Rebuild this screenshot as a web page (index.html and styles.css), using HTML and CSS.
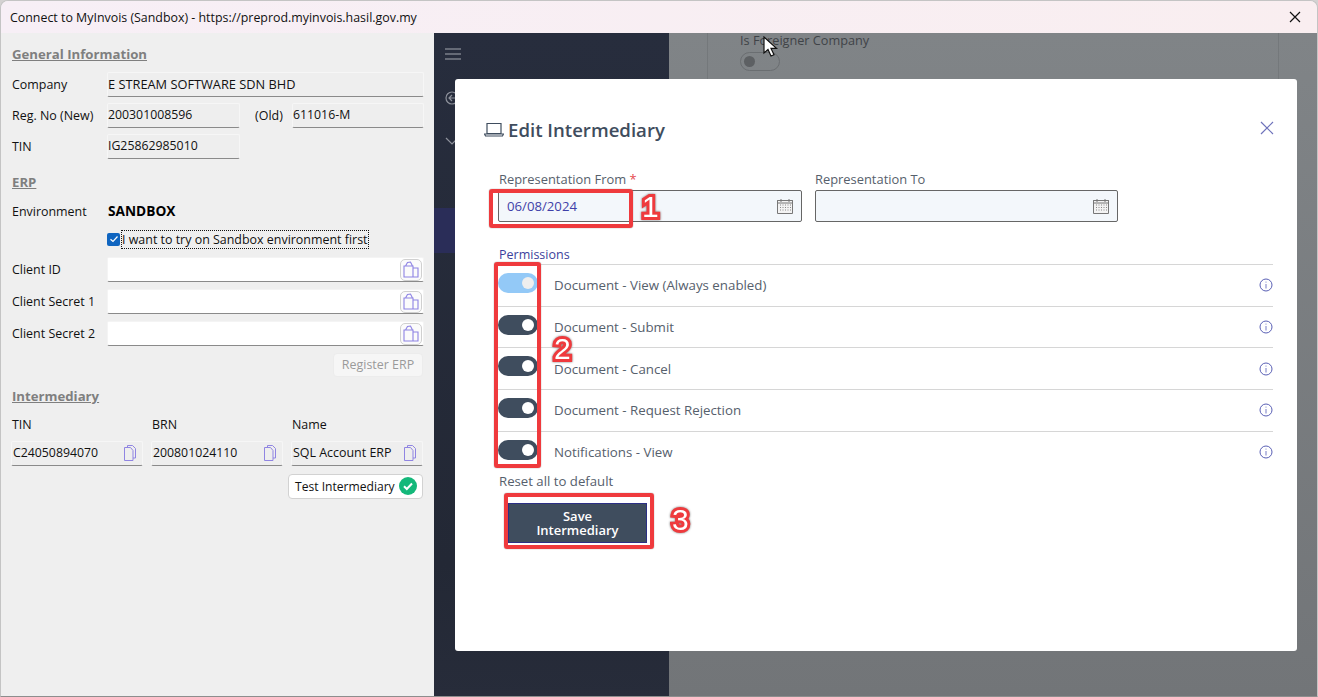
FILE: index.html
```html
<!DOCTYPE html>
<html lang="en">
<head>
<meta charset="utf-8">
<title>Connect to MyInvois (Sandbox)</title>
<link rel="stylesheet" href="styles.css">
</head>
<body>
<svg class="defs" width="0" height="0" aria-hidden="true">
  <symbol id="paste" viewBox="0 0 16 18"><path d="M1 5h9v11H1zM2.500 5 4.500 1.500 7.500 1l2 4M10 7h5v9H7.500M1 16h9" fill="none" stroke="currentColor" stroke-width="1.100"/></symbol>
  <symbol id="copy" viewBox="0 0 14 18"><path d="M4.500 3V1.500h5l3 3V14H10M1.500 3.500h6l2.500 3v10H1.500z" fill="none" stroke="currentColor" stroke-width="1"/></symbol>
  <symbol id="cal" viewBox="0 0 16 16"><path d="M.5 2.500h15v13H.5z" fill="#f3f3f3" stroke="#777"/><path d="M.5 2.500h15v2.500H.5zM4 1v3M12 1v3" fill="none" stroke="#777"/><path d="M3 7h1M5.500 7h1M8 7h1M10.500 7h1M13 7h1M3 9.500h1M5.500 9.500h1M8 9.500h1M10.500 9.500h1M13 9.500h1M3 12h1M5.500 12h1M8 12h1M10.500 12h1M13 12h1" stroke="#888" fill="none"/></symbol>
  <symbol id="info" viewBox="0 0 14 14"><circle cx="7" cy="7" r="6" fill="none" stroke="#5a60b5" stroke-width="1"/><path d="M7 6v4.500" stroke="#9ea2d6" stroke-width="1.400"/><path d="M7 3.600v1.200" stroke="#b4b7e0" stroke-width="1.400"/></symbol>
</svg>
<div class="window">
  <header class="titlebar">
    <span>Connect to MyInvois (Sandbox) - https://preprod.myinvois.hasil.gov.my</span>
    <svg class="win-close" width="12" height="12" viewBox="0 0 12 12"><path d="M1 1l10 10M11 1 1 11" stroke="#111" stroke-width="1.200" fill="none"/></svg>
  </header>
  <div class="content">
    <aside class="panel">
      <h2 class="section first">General Information</h2>
      <div class="row r1"><label class="lbl">Company</label><div class="field ro grow wide-text">E STREAM SOFTWARE SDN BHD</div></div>
      <div class="row r2"><label class="lbl">Reg. No (New)</label><div class="field ro half">200301008596</div><label class="old">(Old)</label><div class="field ro half-b">611016-M</div></div>
      <div class="row r2"><label class="lbl">TIN</label><div class="field ro half">IG25862985010</div></div>
      <h2 class="section erp">ERP</h2>
      <div class="row env"><label class="lbl">Environment</label><strong class="env-value">SANDBOX</strong></div>
      <div class="row chk">
        <span class="checkbox"><svg width="10" height="10" viewBox="0 0 10 10"><path d="M1.500 5.200 4 7.500l4.500-5" fill="none" stroke="#fff" stroke-width="1.200"/></svg></span>
        <span class="chk-text">I want to try on Sandbox environment first</span>
      </div>
      <div class="row cred"><label class="lbl">Client ID</label><div class="field white grow"><span class="paste"><svg width="16" height="18"><use href="#paste"/></svg></span></div></div>
      <div class="row cred"><label class="lbl">Client Secret 1</label><div class="field white grow"><span class="paste"><svg width="16" height="18"><use href="#paste"/></svg></span></div></div>
      <div class="row cred"><label class="lbl">Client Secret 2</label><div class="field white grow"><span class="paste"><svg width="16" height="18"><use href="#paste"/></svg></span></div></div>
      <div class="row end"><button class="btn disabled">Register ERP</button></div>
      <h2 class="section inter">Intermediary</h2>
      <div class="triple labels"><span>TIN</span><span>BRN</span><span>Name</span></div>
      <div class="triple">
        <div class="field ro copyf">C24050894070<svg width="14" height="18"><use href="#copy"/></svg></div>
        <div class="field ro copyf">200801024110<svg width="14" height="18"><use href="#copy"/></svg></div>
        <div class="field ro copyf">SQL Account ERP<svg width="14" height="18"><use href="#copy"/></svg></div>
      </div>
      <div class="row end test-row">
        <button class="btn test">Test Intermediary
          <svg width="18" height="18" viewBox="0 0 18 18"><circle cx="9" cy="9" r="9" fill="#14b87a"/><path d="M5 9.300 7.800 12 13 6.500" fill="none" stroke="#fff" stroke-width="2"/></svg>
        </button>
      </div>
    </aside>
    <main class="webview">
      <nav class="sidebar">
        <svg class="side-ico" width="16" height="12" viewBox="0 0 16 12"><path d="M0 1h16M0 6h16M0 11h16" stroke="#a4a8b0" stroke-width="1"/></svg>
        <svg class="side-back" width="14" height="14" viewBox="0 0 14 14"><circle cx="7" cy="7" r="6" fill="none" stroke="#8d919b" stroke-width="1.200"/><path d="M10 7H4M7 4 4 7l3 3" fill="none" stroke="#8d919b" stroke-width="1.200"/></svg>
        <svg class="side-chev" width="14" height="8" viewBox="0 0 14 8"><path d="m1 1 6 6 6-6" fill="none" stroke="#8d919b" stroke-width="1.200"/></svg>
        <div class="side-active"></div>
      </nav>
      <section class="dim">
        <div class="behind-card">
          <span class="behind-label">Is Foreigner Company</span>
          <span class="behind-toggle"><i></i></span>
        </div>
      </section>

      <div class="modal">
        <div class="modal-head">
          <svg width="20" height="15" viewBox="0 0 20 15"><path d="M3 1.500h14v10H3zM.5 12h19l-1 2H1.500z" fill="none" stroke="#3f4d5e" stroke-width="1.200"/></svg>
          <h1>Edit Intermediary</h1>
          <svg class="modal-x" width="14" height="14" viewBox="0 0 14 14"><path d="m1 1 12 12M13 1 1 13" stroke="#6f73bb" stroke-width="1.200"/></svg>
        </div>
        <div class="dates">
          <div class="date-col">
            <label>Representation From <em>*</em></label>
            <div class="date"><span>06/08/2024</span><svg width="16" height="16"><use href="#cal"/></svg></div>
          </div>
          <div class="date-col second">
            <label>Representation To</label>
            <div class="date"><span></span><svg width="16" height="16"><use href="#cal"/></svg></div>
          </div>
        </div>
        <div class="perm-title">Permissions</div>
        <ul class="perms">
          <li><span class="toggle light"></span><span class="perm-name">Document - View (Always enabled)</span><svg width="14" height="14"><use href="#info"/></svg></li>
          <li><span class="toggle"></span><span class="perm-name">Document - Submit</span><svg width="14" height="14"><use href="#info"/></svg></li>
          <li><span class="toggle"></span><span class="perm-name">Document - Cancel</span><svg width="14" height="14"><use href="#info"/></svg></li>
          <li><span class="toggle"></span><span class="perm-name">Document - Request Rejection</span><svg width="14" height="14"><use href="#info"/></svg></li>
          <li><span class="toggle"></span><span class="perm-name">Notifications - View</span><svg width="14" height="14"><use href="#info"/></svg></li>
        </ul>
        <div class="reset">Reset all to default</div>
        <button class="save">Save<br>Intermediary</button>
      </div>

      <svg class="cursor" width="16" height="22" viewBox="0 0 16 22"><path d="M1 1v16l4-3.500 3 6.500 3-1.300-3-6.300h5.500z" fill="#fff" stroke="#111" stroke-width="1.200"/></svg>

      <div class="mark box1"></div>
      <div class="mark box2"></div>
      <div class="mark box3"></div>
      <span class="num num1">1</span>
      <span class="num num2">2</span>
      <span class="num num3">3</span>
    </main>
  </div>
</div>
</body>
</html>
```

FILE: styles.css
```css
* { box-sizing: border-box; }
html, body { margin: 0; height: 100%; }
body { background: #d4d2d2; overflow: hidden; font-family: "Open Sans", "Noto Sans", sans-serif; }
.defs { position: absolute; }
.window { width: 1318px; height: 697px; display: flex; flex-direction: column; border: 1px solid #c4c4c4; border-bottom-color: #8d8d8d; border-radius: 8px 8px 0 0; overflow: hidden; background: #efefef; }
.titlebar { height: 32px; flex: none; display: flex; align-items: center; justify-content: space-between; padding: 0 16px 0 9px; background: linear-gradient(90deg, #f7eff6, #f9eef0); font-size: 12.400px; color: #111; }
.win-close { display: block; }
.content { flex: 1; display: flex; min-height: 0; }

.panel { width: 433px; flex: none; padding: 0 10px 0 10px; background: #efefef; font-size: 12.450px; color: #111; }
.section { margin: 0; font-size: 13.200px; font-weight: 700; color: #7f7f7f; text-decoration: underline; line-height: 18px; padding-left: 1px; }
.section.first { margin-top: 12px; margin-bottom: 9px; }
.section.erp { margin-top: 14px; margin-bottom: 11px; }
.section.inter { margin-top: 10px; margin-bottom: 11px; }
.row { display: flex; align-items: center; }
.lbl { width: 96px; flex: none; padding-left: 1px; }
.r1 { height: 25px; margin-bottom: 6px; }
.r2 { height: 25px; margin-bottom: 6px; }
.field { height: 25px; border-radius: 2px; border: 1px solid #f6f6f6; border-bottom: 1px solid #8a8a8a; display: flex; align-items: center; padding: 0 0 2px; }
.field.ro { background: #eeeeee; font-size: 12.300px; }
.field.ro.wide-text { font-size: 12.800px; }
.grow { flex: 1; }
.half { width: 133px; flex: none; }
.half-b { width: 132px; flex: none; }
.old { width: 52px; flex: none; text-align: center; padding-left: 6px; }
.env { height: 18px; margin-bottom: 10px; }
.env-value { font-size: 13.700px; font-weight: 700; color: #000; padding: 0 0 2px 1px; }
.chk { height: 18px; margin-bottom: 9px; padding-left: 96px; }
.checkbox { width: 13px; height: 13px; border-radius: 2px; background: #0f65c0; display: flex; align-items: center; justify-content: center; flex: none; }
.chk-text { margin-left: 2px; outline: 1px dotted #111; line-height: 17px; white-space: nowrap; }
.cred { height: 25px; margin-bottom: 7px; }
.field.white { background: #fff; border-color: #f4f4f4; border-bottom-color: #8a8a8a; justify-content: flex-end; padding: 0 1px 0 0; }
.paste { width: 22px; height: 22px; border: 1px solid #d0d0d0; border-radius: 5px; display: flex; align-items: center; justify-content: center; color: #8e83e4; background: #fbfbfb; }
.end { justify-content: flex-end; }
.btn { font: inherit; color: #111; border-radius: 4px; border: 1px solid #d2d2d2; background: #fff; }
.btn.disabled { width: 90px; height: 24px; margin-right: 1px; color: #9a9a9a; background: #f6f6f6; border-color: #ececec; padding: 0 0 2px; }
.triple { display: grid; grid-template-columns: 132px 132px 132px; column-gap: 8px; }
.labels { height: 18px; margin-bottom: 7px; padding-left: 1px; }
.copyf { justify-content: space-between; padding-right: 5px; padding-left: 1px; white-space: nowrap; height: 25px; }
.field.ro.copyf:last-child { font-size: 12.450px; }
.copyf svg { color: #9085e2; flex: none; }
.test-row { margin-top: 8px; }
.btn.test { width: 135px; height: 25px; margin-right: 1px; display: flex; align-items: center; justify-content: space-between; padding: 0 5px 1px 6px; white-space: nowrap; font-size: 12.100px; }

.webview { flex: 1; position: relative; display: flex; min-width: 0; overflow: hidden; }
.sidebar { width: 235px; flex: none; background: linear-gradient(180deg, #272d3d, #232835 80%, #272c3a); position: relative; padding: 15px 0 0 11px; }
.side-ico { display: block; }
.side-back { display: block; margin-top: 31px; }
.side-chev { display: block; margin-top: 32px; }
.side-active { position: absolute; left: 0; right: 0; top: 175px; height: 45px; background: #2a2d58; }
.dim { flex: 1; background: linear-gradient(180deg, #808487, #727578); position: relative; }
.behind-card { position: absolute; left: 38px; right: 38px; top: -5px; height: 60px; border: 1px solid #74787b; border-top: 0; padding: 4px 0 0 32px; font-size: 12.700px; color: #3f4347; }
.behind-label { display: block; width: fit-content; line-height: 17px; }
.behind-toggle { display: block; margin-top: 3px; width: 40px; height: 19px; border: 1px solid #6a6e71; border-radius: 10px; padding: 3px; }
.behind-toggle i { display: block; width: 11px; height: 11px; border-radius: 50%; background: #5d6063; }
.cursor { position: absolute; left: 329px; top: 3px; }

.modal { position: absolute; left: 21px; top: 46px; width: 842px; height: 572px; background: #fff; border-radius: 3px; padding: 0 24px 0 43px; color: #45505e; font-size: 12.500px; }
.modal-head { display: flex; align-items: center; height: 24px; margin-top: 38px; position: absolute; top: 0; left: 29px; right: 23px; }
.modal-head h1 { margin: 0 0 0 4px; font-size: 18.600px; font-weight: 600; color: #3f4d5e; white-space: nowrap; }
.modal-x { margin-left: auto; margin-top: -3px; }
.dates { display: flex; gap: 13px; padding-top: 92px; }
.date-col { width: 304px; }
.date-col.second { width: 303px; }
.date-col label { display: block; line-height: 17px; margin-bottom: 2px; padding-left: 1px; color: #56606c; font-size: 12.900px; }
.date-col.second label { padding-left: 0; }
.date-col em { color: #e5484d; font-style: normal; }
.date { height: 32px; border: 1px solid #666; border-radius: 2px; background: #f3f7fb; display: flex; align-items: center; justify-content: space-between; padding: 0 8px; color: #3f3fa8; font-size: 13.200px; }
.date svg { display: block; }
.perm-title { margin-top: 24px; padding-left: 1px; line-height: 18px; color: #3c3f9c; }
.perms { list-style: none; margin: 0; padding: 0; }
.perms li { height: 41.700px; border-top: 1px solid #d6d6d6; display: flex; align-items: center; }
.perm-name { margin-left: 16px; flex: 1; color: #56606c; font-size: 13.300px; }
.toggle { width: 40px; height: 20px; border-radius: 10px; background: #3f4d5e; position: relative; flex: none; margin-top: -5px; }
.toggle::after { content: ""; position: absolute; right: 4px; top: 4px; width: 12px; height: 12px; border-radius: 50%; background: #fff; }
.toggle.light { background: #93c9f7; }
.toggle.light::after { background: #eeeeee; }
.reset { line-height: 18px; margin-top: 0; padding-left: 1px; color: #56606c; font-size: 13.200px; }
.save { display: block; margin: 13px 0 0 10px; width: 139px; height: 40px; background: #3f4d5e; color: #fff; border: 1px solid #2b2f85; font: 600 13px/14px "Open Sans", "Noto Sans", sans-serif; padding: 0; }

.mark { position: absolute; border: 4px solid #ef3a3d; border-radius: 3px; box-shadow: 0 0 1px #555; }
.box1 { left: 55px; top: 156px; width: 144px; height: 39px; }
.box2 { left: 60px; top: 229px; width: 47px; height: 206px; }
.box3 { left: 70px; top: 460px; width: 150px; height: 56px; }
.num { position: absolute; font: 400 30px/30px "Liberation Sans", sans-serif; color: #fff; -webkit-text-stroke: 6px #ef3a3d; paint-order: stroke fill; filter: drop-shadow(0 0 1px #777); }
.num1 { left: 208px; top: 159px; }
.num2 { left: 120px; top: 301px; }
.num3 { left: 238px; top: 472px; }
```
